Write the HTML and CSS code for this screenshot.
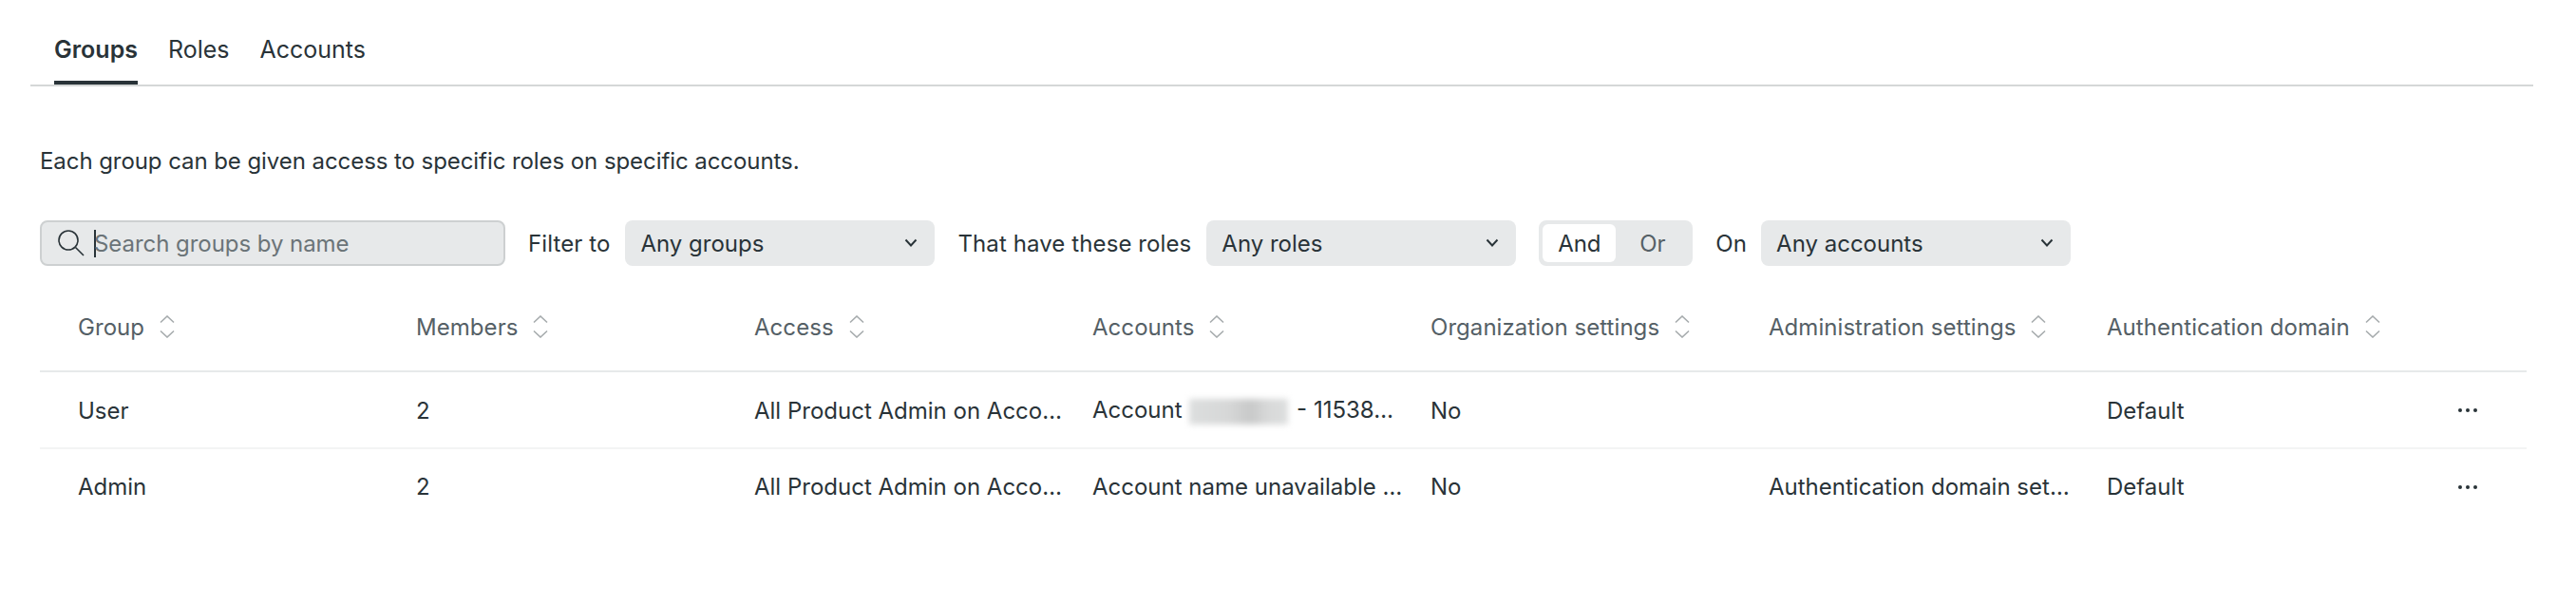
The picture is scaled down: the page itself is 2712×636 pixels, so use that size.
FILE: index.html
```html
<!DOCTYPE html>
<html>
<head>
    <title>Access management</title>
    <link rel="stylesheet" href="styles.css">
</head>
<body>
    <div class="tabs">
        <a class="tab active">Groups</a>
        <a class="tab">Roles</a>
        <a class="tab">Accounts</a>
    </div>

    <div class="content">
        <p class="intro">Each group can be given access to specific roles on specific accounts.</p>

        <div class="filters">
            <div class="search">
                <svg class="search-icon" width="30" height="30" viewBox="0 0 30 30" fill="none" stroke="#293338" stroke-width="1.6">
                    <circle cx="12" cy="12" r="10"/>
                    <path d="M19.5 19.5L28 28"/>
                </svg>
                <span class="caret"></span>
                <input type="text" placeholder="Search groups by name">
            </div>
            <label class="filter-label">Filter to</label>
            <div class="select select-groups">
                <span>Any groups</span>
                <svg class="chevron" width="14" height="10" viewBox="0 0 14 10" fill="none" stroke="#293338" stroke-width="2"><path d="M1.5 1.5L7 7.5L12.5 1.5"/></svg>
            </div>
            <label class="filter-label">That have these roles</label>
            <div class="select select-roles">
                <span>Any roles</span>
                <svg class="chevron" width="14" height="10" viewBox="0 0 14 10" fill="none" stroke="#293338" stroke-width="2"><path d="M1.5 1.5L7 7.5L12.5 1.5"/></svg>
            </div>
            <div class="toggle">
                <button class="toggle-btn on">And</button>
                <button class="toggle-btn">Or</button>
            </div>
            <label class="filter-label filter-on">On</label>
            <div class="select select-accounts">
                <span>Any accounts</span>
                <svg class="chevron" width="14" height="10" viewBox="0 0 14 10" fill="none" stroke="#293338" stroke-width="2"><path d="M1.5 1.5L7 7.5L12.5 1.5"/></svg>
            </div>
        </div>

        <table>
            <thead>
                <tr>
                    <th><div class="th-inner">Group <svg class="sort" width="16" height="24" viewBox="0 0 16 24" fill="none" stroke="#a6abad" stroke-width="1.6"><path d="M1 7.5L8 1L15 7.5M1 16.5L8 23L15 16.5"/></svg></div></th>
                    <th><div class="th-inner">Members <svg class="sort" width="16" height="24" viewBox="0 0 16 24" fill="none" stroke="#a6abad" stroke-width="1.6"><path d="M1 7.5L8 1L15 7.5M1 16.5L8 23L15 16.5"/></svg></div></th>
                    <th><div class="th-inner">Access <svg class="sort" width="16" height="24" viewBox="0 0 16 24" fill="none" stroke="#a6abad" stroke-width="1.6"><path d="M1 7.5L8 1L15 7.5M1 16.5L8 23L15 16.5"/></svg></div></th>
                    <th><div class="th-inner">Accounts <svg class="sort" width="16" height="24" viewBox="0 0 16 24" fill="none" stroke="#a6abad" stroke-width="1.6"><path d="M1 7.5L8 1L15 7.5M1 16.5L8 23L15 16.5"/></svg></div></th>
                    <th><div class="th-inner">Organization settings <svg class="sort" width="16" height="24" viewBox="0 0 16 24" fill="none" stroke="#a6abad" stroke-width="1.6"><path d="M1 7.5L8 1L15 7.5M1 16.5L8 23L15 16.5"/></svg></div></th>
                    <th><div class="th-inner">Administration settings <svg class="sort" width="16" height="24" viewBox="0 0 16 24" fill="none" stroke="#a6abad" stroke-width="1.6"><path d="M1 7.5L8 1L15 7.5M1 16.5L8 23L15 16.5"/></svg></div></th>
                    <th><div class="th-inner">Authentication domain <svg class="sort" width="16" height="24" viewBox="0 0 16 24" fill="none" stroke="#a6abad" stroke-width="1.6"><path d="M1 7.5L8 1L15 7.5M1 16.5L8 23L15 16.5"/></svg></div></th>
                    <th class="col-actions"></th>
                </tr>
            </thead>
            <tbody>
                <tr>
                    <td>User</td>
                    <td>2</td>
                    <td>All Product Admin on Acco…</td>
                    <td>Account <span class="redacted"></span> - 11538…</td>
                    <td>No</td>
                    <td></td>
                    <td>Default</td>
                    <td class="col-actions"><svg class="dots" width="20" height="4" viewBox="0 0 20 4" fill="#293338"><circle cx="2" cy="2" r="2"/><circle cx="10" cy="2" r="2"/><circle cx="18" cy="2" r="2"/></svg></td>
                </tr>
                <tr>
                    <td>Admin</td>
                    <td>2</td>
                    <td>All Product Admin on Acco…</td>
                    <td>Account name unavailable …</td>
                    <td>No</td>
                    <td>Authentication domain set…</td>
                    <td>Default</td>
                    <td class="col-actions"><svg class="dots" width="20" height="4" viewBox="0 0 20 4" fill="#293338"><circle cx="2" cy="2" r="2"/><circle cx="10" cy="2" r="2"/><circle cx="18" cy="2" r="2"/></svg></td>
                </tr>
            </tbody>
        </table>
    </div>
</body>
</html>
```

FILE: styles.css
```css
body {
    font-family: Inter, "Liberation Sans", sans-serif;
    font-size: 24px;
    color: #293338;
    background-color: #ffffff;
    margin: 0;
    padding: 0;
}
.tabs {
    display: flex;
    gap: 32px;
    height: 91px;
    box-sizing: border-box;
    margin: 0 45px 0 32px;
    padding-left: 25px;
    border-bottom: 2px solid #d5d7d7;
    font-size: 25px;
}
.tab {
    height: 89px;
    box-sizing: border-box;
    padding-top: 37px;
    line-height: 30px;
}
.tab.active {
    font-weight: 600;
    border-bottom: 4px solid #293338;
}
.content {
    padding: 64px 52px 0 42px;
}
.intro {
    margin: 0;
    line-height: 30px;
    letter-spacing: -0.07px;
}
.filters {
    display: flex;
    align-items: center;
    margin-top: 47px;
    height: 48px;
}
.search {
    display: flex;
    align-items: center;
    width: 490px;
    height: 48px;
    box-sizing: border-box;
    padding-left: 16px;
    background-color: #e7e9ea;
    border: 2px solid #cdd0d1;
    border-radius: 8px;
}
.search-icon {
    flex: none;
}
.caret {
    flex: none;
    width: 2px;
    height: 29px;
    margin-left: 9px;
    background-color: #293338;
}
.search input {
    flex: 1;
    min-width: 0;
    border: none;
    outline: none;
    background: transparent;
    padding: 0;
    margin-left: -2px;
    font-family: inherit;
    font-size: 24px;
    letter-spacing: -0.05px;
    color: #293338;
}
.search input::placeholder {
    color: #6b7478;
    opacity: 1;
}
.filter-label {
    margin: 0 16px 0 24px;
    white-space: nowrap;
    letter-spacing: 0.1px;
}
.filter-on {
    margin-right: 15px;
}
.select {
    display: flex;
    align-items: center;
    justify-content: space-between;
    height: 48px;
    box-sizing: border-box;
    padding: 0 18px 0 16px;
    background-color: #e7e9ea;
    border-radius: 8px;
}
.select-groups { width: 326px; }
.select-roles { width: 326px; }
.select-accounts { width: 326px; }
.toggle {
    display: flex;
    align-items: stretch;
    width: 162px;
    height: 48px;
    box-sizing: border-box;
    margin-left: 24px;
    padding: 4px;
    background-color: #e7e9ea;
    border-radius: 8px;
}
.toggle-btn {
    border: none;
    background: transparent;
    font-family: inherit;
    font-size: 24px;
    color: #556066;
    padding: 0;
    flex: 1;
}
.toggle-btn.on {
    flex: none;
    width: 77px;
    background-color: #ffffff;
    color: #293338;
    border-radius: 6px;
}
table {
    width: 2618px;
    margin-top: 20px;
    border-collapse: separate;
    border-spacing: 0;
    table-layout: fixed;
}
th {
    height: 92px;
    box-sizing: border-box;
    width: 356px;
    padding: 0 0 2px 40px;
    font-weight: 400;
    color: #556066;
    text-align: left;
    border-bottom: 2px solid #e7e9ea;
    letter-spacing: 0.05px;
}
.th-inner {
    display: flex;
    align-items: center;
    gap: 16px;
    white-space: nowrap;
}
td {
    height: 81px;
    box-sizing: border-box;
    padding: 1px 0 0 40px;
    white-space: nowrap;
    border-bottom: 2px solid #f3f4f4;
}
tbody tr:last-child td {
    height: 78px;
    border-bottom: none;
}
th.col-actions {
    width: auto;
}
td.col-actions {
    padding: 0 52px 0 0;
    text-align: right;
}
.dots {
    display: inline-block;
    vertical-align: middle;
    margin-bottom: 2px;
}
.redacted {
    display: inline-block;
    width: 104px;
    height: 27px;
    margin: 0 2px 0 1px;
    vertical-align: middle;
    background: linear-gradient(90deg, #dcdede 0%, #d6d7d7 40%, #c8c9c9 62%, #d8d9d9 80%, #dcdede 100%);
    filter: blur(3px);
}
```
